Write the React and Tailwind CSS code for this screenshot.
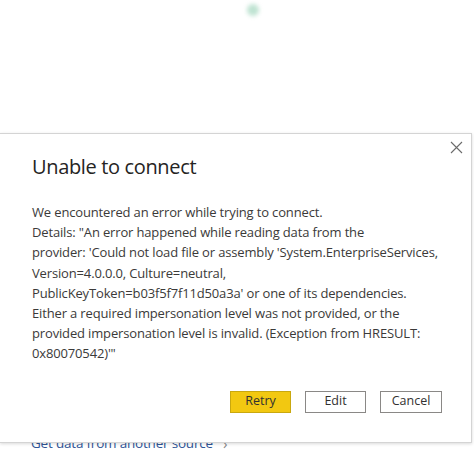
export default function App() {
  const lines = [
    "We encountered an error while trying to connect.",
    "Details: \"An error happened while reading data from the",
    "provider: 'Could not load file or assembly 'System.EnterpriseServices,",
    "Version=4.0.0.0, Culture=neutral,",
    "PublicKeyToken=b03f5f7f11d50a3a' or one of its dependencies.",
    "Either a required impersonation level was not provided, or the",
    "provided impersonation level is invalid. (Exception from HRESULT:",
    "0x80070542)'\"",
  ];
  return (
    <div
      className="relative w-[474px] h-[450px] bg-white overflow-hidden"
      style={{ fontFamily: '"Segoe UI", "Open Sans", "Noto Sans", sans-serif' }}
    >
      {/* background spinner dot */}
      <div className="absolute left-[247px] top-[4px] w-[12px] h-[12px] rounded-full bg-[#bfe3d2] blur-[2px]" />

      {/* background link */}
      <div className="absolute left-[31px] top-[433px] flex items-center gap-[10px] text-[13.5px] tracking-[-0.2px] text-[#2f5597] leading-[20px]">
        <span>Get data from another source</span>
        <span className="text-[#8a8a8a] text-[15px]">›</span>
      </div>

      {/* dialog */}
      <div className="absolute left-0 top-[133px] w-[472px] h-[310px] bg-white border-t border-r border-b border-[#d4d4d4] shadow-[0_1px_3px_rgba(0,0,0,0.15)] pl-[32px] pr-[29px] pt-[19px]">
        <button className="absolute right-[7px] top-[5px] w-[16px] h-[16px] flex items-center justify-center text-[#6b6b6b]">
          <svg width="13" height="13" viewBox="0 0 13 13" fill="none" stroke="currentColor" strokeWidth="1.1">
            <path d="M1 1L12 12M12 1L1 12" />
          </svg>
        </button>
        <div className="text-[20px] leading-[28px] text-[#252423] font-medium tracking-[-0.35px]">
          Unable to connect
        </div>
        <div className="mt-[21px] text-[13px] leading-[20.2px] text-[#3b3a39] tracking-[-0.15px]">
          {lines.map((l, i) => (
            <div key={i} className="whitespace-nowrap">
              {l}
            </div>
          ))}
        </div>
        <div className="mt-[27px] flex justify-end gap-[14px]">
          <button className="w-[61px] h-[22px] bg-[#f2c811] border border-[#c9a80f] text-[12.5px] text-[#323130] flex items-center justify-center">
            Retry
          </button>
          <button className="w-[61px] h-[22px] bg-white border border-[#8a8886] text-[12.5px] text-[#323130] flex items-center justify-center">
            Edit
          </button>
          <button className="w-[62px] h-[22px] bg-white border border-[#8a8886] text-[12.5px] text-[#323130] flex items-center justify-center">
            Cancel
          </button>
        </div>
      </div>
    </div>
  );
}
